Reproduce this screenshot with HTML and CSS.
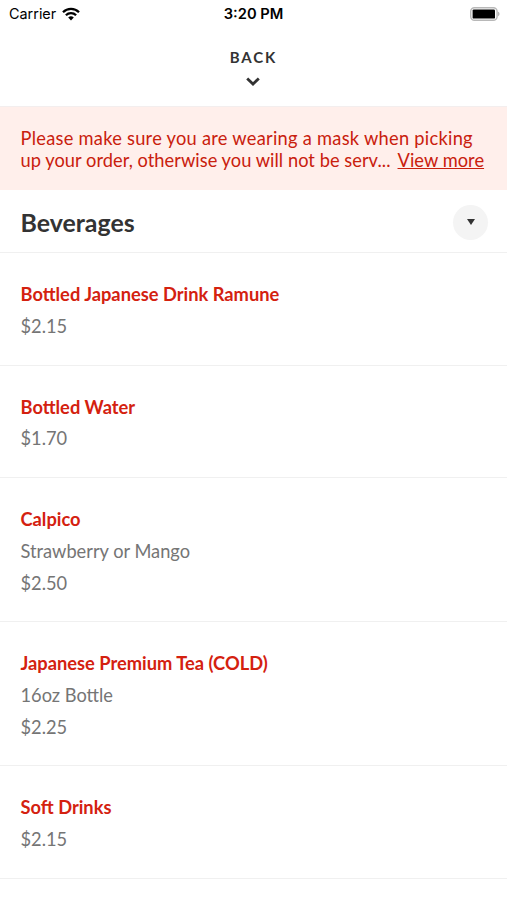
FILE: index.html
```html
<!DOCTYPE html>
<html lang="en">

<head>
    <meta charset="utf-8">
    <title>Beverages</title>
    <link rel="stylesheet" href="styles.css">
</head>

<body>
    <!-- status bar -->
    <div class="status-bar">
        <div class="status-bar__carrier">
            <span>Carrier</span>
            <svg class="wifi-icon" viewBox="0 0 18 14">
                <path d="M9 13.5 6.2 10.6a4 4 0 0 1 5.6 0z" />
                <path d="M3.9 8.3a7.2 7.2 0 0 1 10.2 0M1 5.2a11.4 11.4 0 0 1 16 0" fill="none" stroke="#000000" stroke-width="2.3" />
            </svg>
        </div>
        <div class="status-bar__time">3:20 PM</div>
        <svg class="battery-icon" viewBox="0 0 30 14">
            <rect x=".7" y=".7" width="26.4" height="12.6" rx="3.8" fill="none" stroke="#b8b8b8" stroke-width="1.4" />
            <rect x="2.6" y="2.4" width="22.4" height="9.2" rx="1.2" />
            <path d="M28 4.8c2 .6 2 3.8 0 4.4z" fill="#b8b8b8" />
        </svg>
    </div>
    <!-- header -->
    <header class="back-header">
        <span class="back-header__label">BACK</span>
        <svg class="back-header__icon" viewBox="0 0 14 9">
            <path d="M1.2 1.5 7 7l5.8-5.5" fill="none" stroke="#333333" stroke-width="2.8" />
        </svg>
    </header>
    <!-- notice -->
    <div class="notice">
        <div class="notice__line notice__line--first">Please make sure you are wearing a mask when picking</div>
        <div class="notice__line notice__line--last">
            <span>up your order, otherwise you will not be serv...</span>
            <a class="notice__link">View more</a>
        </div>
    </div>
    <!-- menu -->
    <div class="category">
        <h1 class="category__title">Beverages</h1>
        <div class="category__toggle">
            <svg class="category__arrow" viewBox="0 0 8 6">
                <path d="M0 0h8L4 6z" fill="#333333" />
            </svg>
        </div>
    </div>
    <ul class="menu">
        <li class="menu__item">
            <h2 class="menu__name">Bottled Japanese Drink Ramune</h2>
            <p class="menu__text">$2.15</p>
        </li>
        <li class="menu__item">
            <h2 class="menu__name">Bottled Water</h2>
            <p class="menu__text">$1.70</p>
        </li>
        <li class="menu__item">
            <h2 class="menu__name">Calpico</h2>
            <p class="menu__text">Strawberry or Mango</p>
            <p class="menu__text">$2.50</p>
        </li>
        <li class="menu__item">
            <h2 class="menu__name">Japanese Premium Tea (COLD)</h2>
            <p class="menu__text">16oz Bottle</p>
            <p class="menu__text">$2.25</p>
        </li>
        <li class="menu__item">
            <h2 class="menu__name">Soft Drinks</h2>
            <p class="menu__text">$2.15</p>
        </li>
    </ul>
</body>

</html>
```
FILE: styles.css
```css
* {
    box-sizing: border-box;
}
body {
    margin: 0;
    background-color: #ffffff;
    color: #333333;
    font: normal 18.25px/22px Lato, sans-serif;
    overflow: hidden;
}

/* ========== */
/* Status bar */
/* ========== */
.status-bar {
    display: grid;
    grid-template-columns: 1fr auto 1fr;
    align-items: center;
    height: 27px;
    padding: 0 7px 0 9px;
    color: #000000;
    font: normal 14.4px/20px Inter, sans-serif;
}
.status-bar__carrier {
    display: flex;
    align-items: center;
    gap: 6px;
}
.status-bar__time {
    margin-right: 2px;
    font-size: 14.7px;
    font-weight: 600;
}
.wifi-icon {
    width: 18px;
    height: 14px;
}
.battery-icon {
    justify-self: end;
    width: 30px;
    height: 14px;
}

/* ====== */
/* Header */
/* ====== */
.back-header {
    display: flex;
    flex-direction: column;
    align-items: center;
    height: 80px;
    padding: 19px 1px 0 0;
    border-bottom: solid 1px #f3eeee;
}
.back-header__label {
    padding-left: 1px;
    font-size: 15px;
    font-weight: bold;
    letter-spacing: 1.9px;
}
.back-header__icon {
    width: 14px;
    height: 9px;
    margin-top: 9px;
}

/* ====== */
/* Notice */
/* ====== */
.notice {
    height: 83px;
    padding: 20px 20px 0 20.5px;
    background-color: #ffefeb;
    color: #c9200d;
    white-space: nowrap;
}
.notice__line--first {
    letter-spacing: 0.27px;
}
.notice__line--last {
    display: flex;
    gap: 7px;
    letter-spacing: 0.04px;
}
.notice__link {
    text-decoration: underline;
}

/* ==== */
/* Menu */
/* ==== */
.category {
    display: flex;
    align-items: center;
    justify-content: space-between;
    height: 63.4px;
    padding: 2px 19px 0 20.5px;
    border-bottom: solid 1px #f0f0f0;
}
.category__title {
    margin: 0;
    font-size: 24.9px;
    line-height: 30px;
}
.category__toggle {
    display: flex;
    align-items: center;
    justify-content: center;
    width: 35px;
    height: 35px;
    border-radius: 50%;
    background-color: #f4f4f4;
}
.category__arrow {
    width: 8px;
    height: 6px;
}
.menu {
    margin: 0;
    padding: 0;
    list-style: none;
}
.menu__item {
    display: flex;
    flex-direction: column;
    gap: 9.75px;
    padding: 30px 20.5px 27.6px;
    border-bottom: solid 1px #f0f0f0;
}
.menu__name {
    margin: 0;
    color: #d4210f;
    font-size: 18.3px;
    line-height: 22px;
}
.menu__text {
    margin: 0;
    color: #757575;
}
```
